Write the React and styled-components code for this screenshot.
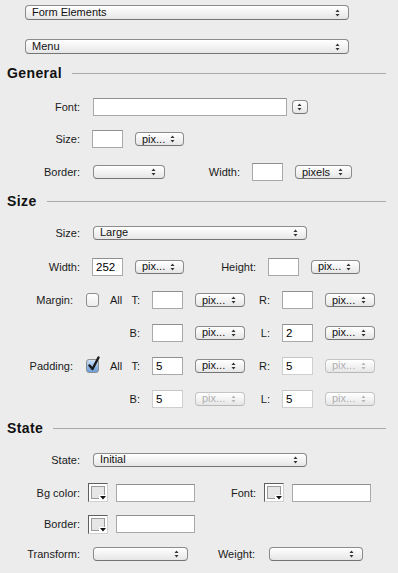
import React from 'react';
import styled, { createGlobalStyle } from 'styled-components';

const GlobalStyle = createGlobalStyle`
  html, body {
    margin: 0;
    padding: 0;
    background: #ececec;
  }
  body {
    font-family: "Liberation Sans", Arial, sans-serif;
    font-size: 11px;
    color: #1a1a1a;
  }
`;

// 페이지 전체
const Page = styled.div`
  width: 398px;
  height: 573px;
  overflow: hidden;
  display: flex;
  flex-direction: column;
  padding-top: 5px;
  box-sizing: border-box;
`;

const TopRow = styled.div`
  display: flex;
  padding-left: 25px;
  margin-bottom: ${(p) => p.$mb || 0}px;
`;

const Heading = styled.div`
  display: flex;
  align-items: center;
  height: 20px;
  padding: 0 12px 0 7px;
  margin-top: ${(p) => p.$mt}px;
  margin-bottom: ${(p) => p.$mb}px;

  h2 {
    margin: 0;
    font-size: 14px;
    font-weight: bold;
    letter-spacing: 0.4px;
    color: #111;
  }
  hr {
    flex: 1;
    margin: 1px 0 0 10px;
    border: 0;
    border-top: 1px solid #a9a9a9;
  }
`;

const Row = styled.div`
  display: flex;
  align-items: center;
  height: ${(p) => p.$h || 33}px;
`;

const Label = styled.span`
  width: ${(p) => p.$w}px;
  flex: none;
  text-align: right;
  white-space: nowrap;
  margin-right: ${(p) => (p.$gap === undefined ? 12 : p.$gap)}px;
  color: #1a1a1a;
`;

const SelectBox = styled.div`
  position: relative;
  box-sizing: border-box;
  width: ${(p) => p.$w}px;
  height: ${(p) => p.$h || 14}px;
  margin-right: ${(p) => p.$mr || 0}px;
  border: 1px solid ${(p) => (p.$disabled ? '#c4c4c4' : '#8c8c8c')};
  border-bottom-color: ${(p) => (p.$disabled ? '#b8b8b8' : '#747474')};
  border-radius: 4px;
  background: linear-gradient(#ffffff, #f3f3f3 50%, #e6e6e6);
  display: flex;
  align-items: center;
  padding-left: 6px;
  font-size: 11px;
  line-height: 1;
  color: ${(p) => (p.$disabled ? '#b0b0b0' : '#111')};
  flex: none;

  svg {
    position: absolute;
    right: 8px;
    top: 50%;
    transform: translateY(-50%);
  }
`;

const Stepper = styled(SelectBox)`
  padding: 0;
  svg {
    right: 5px;
  }
`;

const Field = styled.div`
  box-sizing: border-box;
  width: ${(p) => p.$w}px;
  height: ${(p) => p.$h || 18}px;
  margin-right: ${(p) => p.$mr || 0}px;
  background: #fff;
  border: 1px solid ${(p) => (p.$disabled ? '#cfcfcf' : '#a9a9a9')};
  border-top-color: ${(p) => (p.$disabled ? '#c6c6c6' : '#8f8f8f')};
  padding: 1px 3px 0;
  display: flex;
  align-items: center;
  font-size: 11.5px;
  color: #000;
  flex: none;
`;

const CheckCell = styled.div`
  width: 67px;
  flex: none;
  display: flex;
  align-items: center;
  margin-right: 12px;

  .all {
    margin-left: 11px;
  }
  .sub {
    margin-left: auto;
  }
`;

const Check = styled.div`
  box-sizing: border-box;
  width: 13px;
  height: 14px;
  margin-left: 13px;
  border: 1px solid #8e8e8e;
  border-radius: 3px;
  position: relative;
  background: ${(p) =>
    p.$checked
      ? 'linear-gradient(#cfe2f7, #8fb8e6 55%, #6d9fd8)'
      : 'linear-gradient(#ffffff, #ececec)'};

  svg {
    position: absolute;
    left: 0px;
    top: -4px;
  }
`;

const Well = styled.div`
  box-sizing: border-box;
  width: 20px;
  height: 19px;
  margin-right: 8px;
  flex: none;
  position: relative;
  border: 1px solid #5f5f5f;
  border-right-color: #d0d0d0;
  border-bottom-color: #d0d0d0;
  background: #fff;
  padding: 2px;

  .swatch {
    width: 100%;
    height: 100%;
    box-sizing: border-box;
    background: #e6e6e6;
    border: 1px solid #9a9a9a;
  }
  .drop {
    position: absolute;
    right: 0;
    bottom: 0;
    width: 8px;
    height: 6px;
    background: #fff;
    display: flex;
    align-items: center;
    justify-content: center;
  }
`;

const Arrows = ({ color = '#333' }) => (
  <svg width="5" height="8" viewBox="0 0 5 8">
    <polygon points="0.5,3 2.5,0.5 4.5,3" fill={color} />
    <polygon points="0.5,5 2.5,7.5 4.5,5" fill={color} />
  </svg>
);

const Select = ({ w, h, mr, disabled, children }) => (
  <SelectBox $w={w} $h={h} $mr={mr} $disabled={disabled}>
    {children}
    <Arrows color={disabled ? '#b5b5b5' : '#333'} />
  </SelectBox>
);

const ColorWell = () => (
  <Well>
    <div className="swatch" />
    <div className="drop">
      <svg width="6" height="4" viewBox="0 0 6 4">
        <polygon points="0,0 6,0 3,3.5" fill="#111" />
      </svg>
    </div>
  </Well>
);

const Tick = () => (
  <svg width="14" height="16" viewBox="0 0 14 16">
    <path
      d="M2.5 9.5 L5.5 13 L11.5 1.5"
      stroke="#1b1b1b"
      strokeWidth="2.4"
      fill="none"
      strokeLinecap="round"
      strokeLinejoin="round"
    />
  </svg>
);

const BoxRow = ({ h, label, check, checked, sub, t, tOff, r, rLabel, rOff }) => (
  <Row $h={h}>
    <Label $w={73} $gap={0}>{label}</Label>
    <CheckCell>
      {check && <Check $checked={checked}>{checked && <Tick />}</Check>}
      {check && <span className="all">All</span>}
      <span className="sub">{sub}</span>
    </CheckCell>
    <Field $w={31} $mr={12} $disabled={tOff}>{t}</Field>
    <Select w={50} disabled={tOff}>pix...</Select>
    <Label $w={25}>{rLabel}</Label>
    <Field $w={31} $mr={12} $disabled={rOff}>{r}</Field>
    <Select w={50} disabled={rOff}>pix...</Select>
  </Row>
);

export default function App() {
  return (
    <>
      <GlobalStyle />
      <Page>
        <TopRow $mb={19}>
          <Select w={324} h={15}>Form Elements</Select>
        </TopRow>
        <TopRow>
          <Select w={324} h={15}>Menu</Select>
        </TopRow>

        <Heading $mt={9} $mb={7}>
          <h2>General</h2>
          <hr />
        </Heading>
        <Row>
          <Label $w={80} $gap={13}>Font:</Label>
          <Field $w={194} $mr={5} />
          <Stepper $w={16} $h={14}>
            <Arrows />
          </Stepper>
        </Row>
        <Row $h={32}>
          <Label $w={80}>Size:</Label>
          <Field $w={31} $mr={12} />
          <Select w={49}>pix...</Select>
        </Row>
        <Row $h={34}>
          <Label $w={80} $gap={13}>Border:</Label>
          <Select w={72}>{''}</Select>
          <Label $w={75}>Width:</Label>
          <Field $w={31} $mr={12} />
          <Select w={57}>pixels</Select>
        </Row>

        <Heading $mt={2} $mb={5}>
          <h2>Size</h2>
          <hr />
        </Heading>
        <Row>
          <Label $w={80} $gap={13}>Size:</Label>
          <Select w={214}>Large</Select>
        </Row>
        <Row $h={35}>
          <Label $w={80}>Width:</Label>
          <Field $w={31} $mr={12}>252</Field>
          <Select w={49}>pix...</Select>
          <Label $w={72}>Height:</Label>
          <Field $w={31} $mr={12} />
          <Select w={49}>pix...</Select>
        </Row>
        <BoxRow h={32} label="Margin:" check sub="T:" rLabel="R:" />
        <BoxRow h={33} sub="B:" rLabel="L:" r="2" />
        <BoxRow h={33} label="Padding:" check checked sub="T:" t="5" rLabel="R:" r="5" rOff />
        <BoxRow h={33} sub="B:" t="5" tOff rLabel="L:" r="5" rOff />

        <Heading $mt={3} $mb={5}>
          <h2>State</h2>
          <hr />
        </Heading>
        <Row>
          <Label $w={80} $gap={13}>State:</Label>
          <Select w={214}>Initial</Select>
        </Row>
        <Row>
          <Label $w={80} $gap={8}>Bg color:</Label>
          <ColorWell />
          <Field $w={79} />
          <Label $w={61} $gap={8}>Font:</Label>
          <ColorWell />
          <Field $w={79} />
        </Row>
        <Row $h={30}>
          <Label $w={80} $gap={8}>Border:</Label>
          <ColorWell />
          <Field $w={79} />
        </Row>
        <Row $h={30}>
          <Label $w={80} $gap={13}>Transform:</Label>
          <Select w={95}>{''}</Select>
          <Label $w={67} $gap={14}>Weight:</Label>
          <Select w={94}>{''}</Select>
        </Row>
      </Page>
    </>
  );
}
